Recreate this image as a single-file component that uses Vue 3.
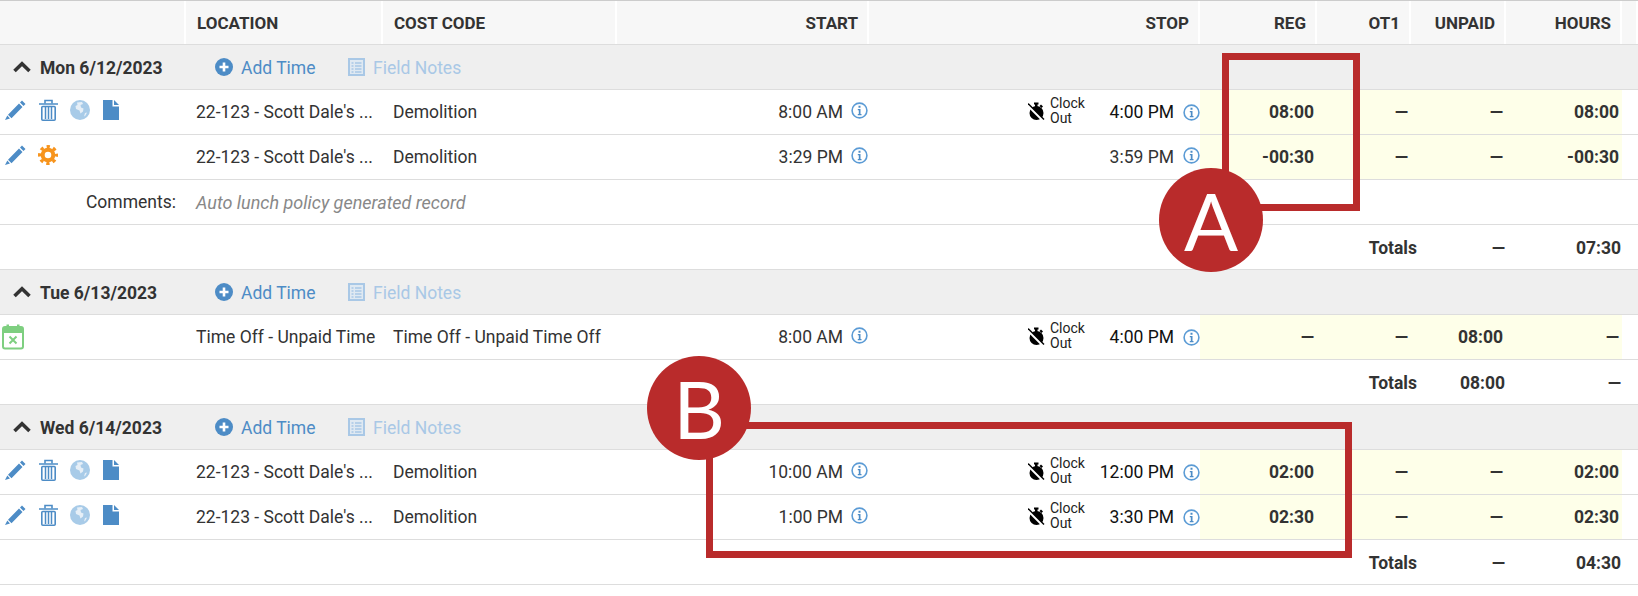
<script setup>
const heads = [
  { t: '' }, { t: 'LOCATION' }, { t: 'COST CODE' }, { t: 'START', r: 1 }, { t: 'STOP', r: 1 },
  { t: 'REG', r: 1 }, { t: 'OT1', r: 1 }, { t: 'UNPAID', r: 1 }, { t: 'HOURS', r: 1 }, { t: '' }
]
const LOC = "22-123 - Scott Dale's ..."
const days = [
  {
    date: 'Mon 6/12/2023',
    rows: [
      { icons: 'full', loc: LOC, code: 'Demolition', start: '8:00 AM', stop: '4:00 PM', clock: true, reg: '08:00', ot: '—', un: '—', hrs: '08:00' },
      { icons: 'auto', loc: LOC, code: 'Demolition', start: '3:29 PM', stop: '3:59 PM', clock: false, reg: '-00:30', ot: '—', un: '—', hrs: '-00:30' }
    ],
    comment: 'Auto lunch policy generated record',
    totals: ['—', '07:30']
  },
  {
    date: 'Tue 6/13/2023',
    rows: [
      { icons: 'off', loc: 'Time Off - Unpaid Time', code: 'Time Off - Unpaid Time Off', start: '8:00 AM', stop: '4:00 PM', clock: true, reg: '—', ot: '—', un: '08:00', hrs: '—' }
    ],
    totals: ['08:00', '—']
  },
  {
    date: 'Wed 6/14/2023',
    rows: [
      { icons: 'full', loc: LOC, code: 'Demolition', start: '10:00 AM', stop: '12:00 PM', clock: true, reg: '02:00', ot: '—', un: '—', hrs: '02:00' },
      { icons: 'full', loc: LOC, code: 'Demolition', start: '1:00 PM', stop: '3:30 PM', clock: true, reg: '02:30', ot: '—', un: '—', hrs: '02:30' }
    ],
    totals: ['—', '04:30']
  }
]
</script>

<template>
  <div class="sheet">
    <div class="grid head">
      <div v-for="(h, i) in heads" :key="i" class="hcell" :class="{ right: h.r }">{{ h.t }}</div>
    </div>

    <template v-for="d in days" :key="d.date">
      <div class="group">
        <svg class="chev" viewBox="0 0 18 12" width="18" height="12"><path d="M1.5 10 L9 2.8 L16.5 10" fill="none" stroke="#333" stroke-width="3.6" /></svg>
        <span class="date">{{ d.date }}</span>
        <svg class="add" viewBox="0 0 18 18" width="18" height="18"><circle cx="9" cy="9" r="9" fill="#4d8cc6" /><path d="M9 4.5v9M4.5 9h9" stroke="#fff" stroke-width="2.6" /></svg>
        <span class="link">Add Time</span>
        <svg class="notes" viewBox="0 0 17 18" width="17" height="18">
          <rect x="1" y="1" width="15" height="16" fill="#dfe9f2" stroke="#a9c8e6" stroke-width="2" />
          <path d="M3.5 5h2M7 5h6.5M3.5 8h2M7 8h6.5M3.5 11h2M7 11h6.5M3.5 14h2M7 14h6.5" stroke="#a9c8e6" stroke-width="1.3" />
        </svg>
        <span class="link faded">Field Notes</span>
      </div>

      <div v-for="(r, i) in d.rows" :key="i" class="grid row">
        <div class="cell icons" :class="{ offcell: r.icons === 'off' }">
          <svg v-if="r.icons === 'off'" class="cal" viewBox="0 0 22 26" width="22" height="26">
            <rect x="1" y="3" width="20" height="21.5" rx="2" fill="#fff" stroke="#7ecf80" stroke-width="2" />
            <rect x="1" y="3" width="20" height="6" fill="#7ecf80" />
            <rect x="4.5" y="0.5" width="2.5" height="4" fill="#7ecf80" /><rect x="15" y="0.5" width="2.5" height="4" fill="#7ecf80" />
            <path d="M7.5 12.5l7 7M14.500 12.500l-7 7" stroke="#7ecf80" stroke-width="2" />
          </svg>
          <template v-else>
            <svg class="pencil" viewBox="0 0 21 20" width="21" height="20">
              <path d="M17 0.500l3.500 3.500-2 2-3.500-3.500zM14 3.500l3.500 3.500-11 11.200-3.500-3.500zM2.300 15.500l2.700 2.900-5 1.600z" fill="#4d8cc6" />
            </svg>
            <template v-if="r.icons === 'full'">
              <svg class="trash" viewBox="0 0 19 22" width="19" height="22">
                <path d="M6 4.500V1.500h7v3" fill="none" stroke="#4d8cc6" stroke-width="1.600" />
                <path d="M0 5h19" stroke="#4d8cc6" stroke-width="1.500" />
                <rect x="2.800" y="7.500" width="13.400" height="13.700" rx="1" fill="none" stroke="#4d8cc6" stroke-width="1.600" />
                <path d="M6.500 8v12M9.500 8v12M12.500 8v12" stroke="#4d8cc6" stroke-width="1.500" />
              </svg>
              <svg class="globe" viewBox="0 0 20 20" width="20" height="20">
                <circle cx="10" cy="10" r="10" fill="#a8cbe8" />
                <path d="M7 2.500l5-.5 1 2-2.500 1 .5 2.500 2.500 1-.5 3-2.500 2-1-3-3.500-1.500-.5-3 2-1zM15 13l2-.5-1.500 3-1.500 1z" fill="#e6eff7" />
              </svg>
              <svg class="doc" viewBox="0 0 16 20" width="16" height="20">
                <path d="M0 0h9.500v6.500H16V20H0z" fill="#4d8cc6" /><path d="M11 0l5 5h-5z" fill="#4d8cc6" />
              </svg>
            </template>
            <svg v-else class="gear" viewBox="0 0 20 20" width="20" height="20">
              <circle cx="10" cy="10" r="5.300" fill="none" stroke="#f7941d" stroke-width="4" />
              <circle cx="10" cy="10" r="8.400" fill="none" stroke="#f7941d" stroke-width="3.200" stroke-dasharray="3.300 3.297" stroke-dashoffset="1.650" />
            </svg>
          </template>
        </div>
        <div class="cell text">{{ r.loc }}</div>
        <div class="cell text">{{ r.code }}</div>
        <div class="cell time">
          <span>{{ r.start }}</span>
          <svg class="info up" viewBox="0 0 17 17" width="17" height="17">
            <circle cx="8.500" cy="8.500" r="7.400" fill="none" stroke="#5b9bd5" stroke-width="1.600" />
            <path d="M7.500 3.800h2v2h-2zM6.800 7h2.700v5h1v1.200H6.800V12h1V8.200h-1z" fill="#4d8cc6" />
          </svg>
        </div>
        <div class="cell stop">
          <div v-if="r.clock" class="clock">
            <svg viewBox="0 0 17 18" width="17" height="18">
              <path d="M6 0.500h4.500v2H9.500v2.500h-2.500V2.500H6z" fill="#000" /><path d="M13 2.500l2 2-1.500 1.500-2-2z" fill="#000" />
              <circle cx="8.500" cy="11" r="7" fill="#000" />
              <path d="M0 3.500L14 17.500" stroke="#fff" stroke-width="2.600" />
              <path d="M0 1.500L16 17.500" stroke="#000" stroke-width="1.400" />
            </svg>
            <span class="clocktext">Clock<br />Out</span>
          </div>
          <span class="stoptime" :class="{ dark: r.clock }">{{ r.stop }}</span>
          <svg class="info" :class="{ up: !r.clock }" viewBox="0 0 17 17" width="17" height="17">
            <circle cx="8.500" cy="8.500" r="7.400" fill="none" stroke="#5b9bd5" stroke-width="1.600" />
            <path d="M7.500 3.800h2v2h-2zM6.800 7h2.700v5h1v1.200H6.800V12h1V8.200h-1z" fill="#4d8cc6" />
          </svg>
        </div>
        <div class="cell num">{{ r.reg }}</div>
        <div class="cell num">{{ r.ot }}</div>
        <div class="cell num">{{ r.un }}</div>
        <div class="cell num">{{ r.hrs }}</div>
        <div></div>
      </div>

      <div v-if="d.comment" class="comment">
        <span class="clabel">Comments:</span>
        <span class="ctext">{{ d.comment }}</span>
      </div>

      <div class="totals">
        <span class="tlabel">Totals</span>
        <span class="tval">{{ d.totals[0] }}</span>
        <span class="tval last">{{ d.totals[1] }}</span>
      </div>
    </template>

    <div class="box box-a"></div>
    <div class="box box-b"></div>
    <div class="badge badge-a">A</div>
    <div class="badge badge-b">B</div>
  </div>
</template>

<style scoped>
.sheet {
  position: relative;
  width: 1638px;
  height: 596px;
  overflow: hidden;
  background: #fff;
  font-family: Roboto, "Liberation Sans", sans-serif;
  font-size: 17.5px;
  color: #333;
}
.grid {
  display: grid;
  grid-template-columns: 186px 197px 234px 252px 331px 117px 94px 95px 116px 16px;
}
.head {
  height: 45px;
  box-sizing: border-box;
  border-top: 1px solid #ccc;
  border-bottom: 1px solid #ddd;
}
.hcell {
  background: #f7f7f7;
  border-right: 2px solid #fff;
  display: flex;
  align-items: center;
  padding-left: 11px;
  font-weight: 700;
  font-size: 17px;
  color: #333;
}
.hcell.right {
  justify-content: flex-end;
  padding: 0 9px 0 0;
}
.group {
  height: 45px;
  box-sizing: border-box;
  background: #efefef;
  border-bottom: 1px solid #ddd;
  display: flex;
  align-items: center;
}
.chev { margin-left: 13px; flex: none; margin-top: -1px; }
.date { margin-left: 9px; width: 175px; font-weight: 700; color: #333; padding-top: 1px; }
.add { flex: none; margin-top: -1px; }
.link { margin-left: 8px; color: #4d8cc6; width: 107px; padding-top: 1px; }
.notes { flex: none; margin-top: -1px; }
.faded { color: #a9c8e6; }
.row {
  height: 45px;
  box-sizing: border-box;
  border-bottom: 1px solid #ddd;
}
.cell {
  display: flex;
  align-items: center;
  white-space: nowrap;
}
.text { padding-left: 10px; }
.icons { position: relative; padding-left: 5px; }
.offcell { padding-left: 2px; }
.pencil { margin-top: -4px; flex: none; }
.trash { margin-left: 13px; margin-top: -4px; flex: none; }
.globe { margin-left: 12px; margin-top: -4px; flex: none; }
.doc { margin-left: 13px; margin-top: -4px; flex: none; }
.gear { margin-left: 12px; margin-top: -4px; flex: none; }
.cal { margin-top: 0; }
.time {
  justify-content: flex-end;
}
.time span { margin-right: 8px; }
.info { flex: none; }
.info.up { margin-top: -3px; }
.time .info { margin-right: 1px; }
.stop { padding-left: 159px; }
.clock {
  display: flex;
  align-items: center;
  gap: 5px;
  margin-top: -2px;
}
.clocktext {
  font-size: 14px;
  line-height: 15px;
  color: #222;
}
.stoptime { margin-left: auto; margin-right: 9px; }
.dark { color: #111; }
.num {
  justify-content: flex-end;
  padding-right: 3px;
  background: #feffe9;
  font-weight: 700;
}
.comment {
  height: 45px;
  box-sizing: border-box;
  border-bottom: 1px solid #ddd;
  display: flex;
  align-items: center;
}
.clabel {
  width: 176px;
  text-align: right;
  margin-right: 20px;
}
.ctext {
  font-style: italic;
  font-size: 18px;
  color: #888;
}
.totals {
  height: 45px;
  box-sizing: border-box;
  border-bottom: 1px solid #ddd;
  display: grid;
  grid-template-columns: 1fr 88px 116px;
  padding: 1px 17px 0 0;
  align-items: center;
  font-weight: 700;
  text-align: right;
}
.box {
  position: absolute;
  box-sizing: border-box;
  border: 7px solid #b92b2b;
}
.box-a { left: 1222px; top: 53px; width: 138px; height: 158px; }
.box-b { left: 706px; top: 422px; width: 646px; height: 136px; }
.badge {
  position: absolute;
  width: 104px;
  height: 104px;
  border-radius: 50%;
  background: #b92b2b;
  color: #fff;
  font-family: Lato, sans-serif;
  font-size: 80px;
  line-height: 104px;
  text-align: center;
}
.badge-a { left: 1159px; top: 168px; }
.badge-b { left: 647px; top: 356px; }
</style>
